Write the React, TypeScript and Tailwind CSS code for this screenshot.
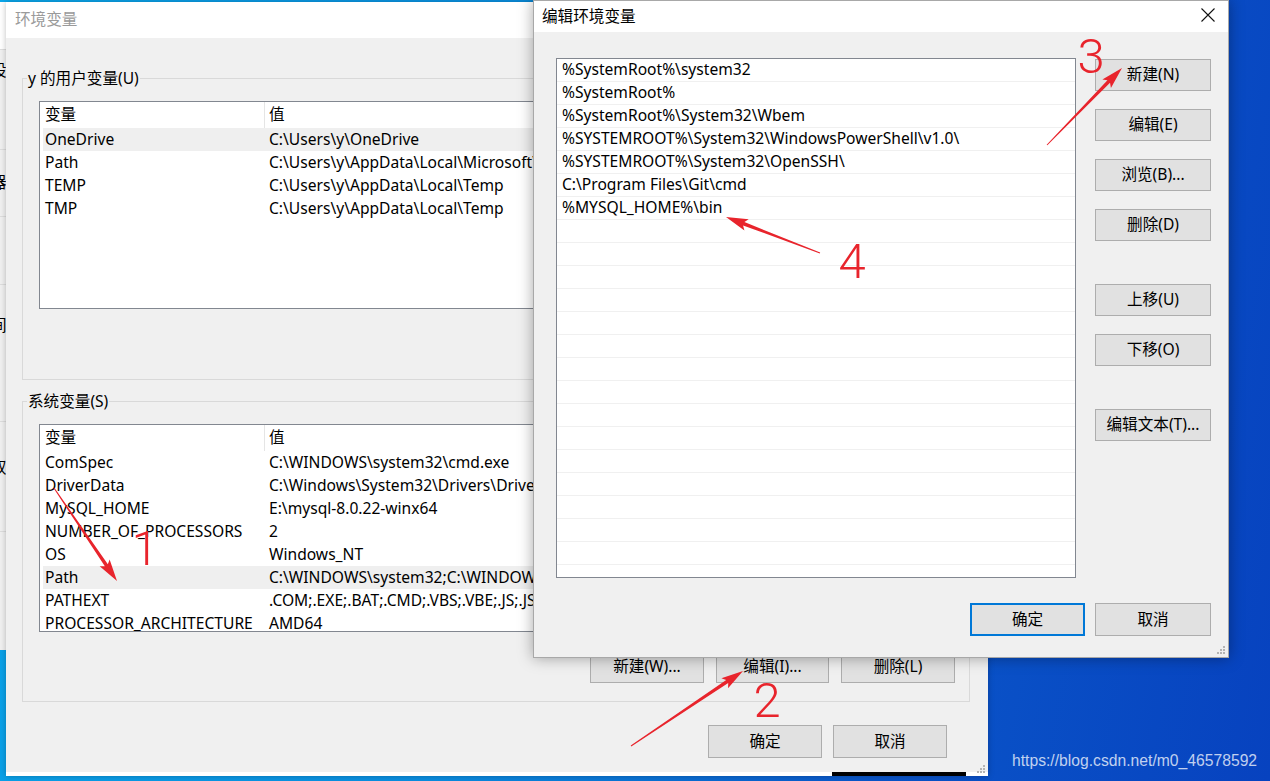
import React from 'react';

type Pair = [string, string];

const userVars: Pair[] = [
  ['OneDrive', 'C:\\Users\\y\\OneDrive'],
  ['Path', 'C:\\Users\\y\\AppData\\Local\\Microsoft\\WindowsApps;'],
  ['TEMP', 'C:\\Users\\y\\AppData\\Local\\Temp'],
  ['TMP', 'C:\\Users\\y\\AppData\\Local\\Temp'],
];

const sysVars: Pair[] = [
  ['ComSpec', 'C:\\WINDOWS\\system32\\cmd.exe'],
  ['DriverData', 'C:\\Windows\\System32\\Drivers\\DriverData'],
  ['MySQL_HOME', 'E:\\mysql-8.0.22-winx64'],
  ['NUMBER_OF_PROCESSORS', '2'],
  ['OS', 'Windows_NT'],
  ['Path', 'C:\\WINDOWS\\system32;C:\\WINDOWS;C:\\WINDOWS\\System32\\Wbem;'],
  ['PATHEXT', '.COM;.EXE;.BAT;.CMD;.VBS;.VBE;.JS;.JSE;.WSF;.WSH;.MSC'],
  ['PROCESSOR_ARCHITECTURE', 'AMD64'],
  ['PROCESSOR_IDENTIFIER', 'Intel64 Family 6 Model 158'],
];

const pathEntries = [
  '%SystemRoot%\\system32',
  '%SystemRoot%',
  '%SystemRoot%\\System32\\Wbem',
  '%SYSTEMROOT%\\System32\\WindowsPowerShell\\v1.0\\',
  '%SYSTEMROOT%\\System32\\OpenSSH\\',
  'C:\\Program Files\\Git\\cmd',
  '%MYSQL_HOME%\\bin',
];

// red annotation arrows: tail -> tip
const arrows = [
  [54, 488, 117, 581],
  [631, 746, 743, 671],
  [1047, 145, 1122, 68],
  [820, 253, 726, 217],
];

const marks = [
  { n: '1', x: 145, y: 565 },
  { n: '2', x: 767, y: 717 },
  { n: '3', x: 1091, y: 73 },
  { n: '4', x: 852, y: 278 },
];

function arrowPoints(x1: number, y1: number, x2: number, y2: number) {
  const dx = x2 - x1;
  const dy = y2 - y1;
  const len = Math.hypot(dx, dy);
  const ux = dx / len;
  const uy = dy / len;
  const nx = -uy;
  const ny = ux;
  const H = 19, W = 6, w2 = 1.8, w1 = 0.5;
  const bx = x2 - ux * H;
  const by = y2 - uy * H;
  const pts = [
    [x1 + nx * w1, y1 + ny * w1],
    [bx + nx * w2, by + ny * w2],
    [bx - ux * 3 + nx * W, by - uy * 3 + ny * W],
    [x2, y2],
    [bx - ux * 3 - nx * W, by - uy * 3 - ny * W],
    [bx - nx * w2, by - ny * w2],
    [x1 - nx * w1, y1 - ny * w1],
  ];
  return pts.map((p) => p.join(',')).join(' ');
}

const Btn = ({ label, w = 'w-[114px]', h = 'h-[33px]', focused = false }: { label: string; w?: string; h?: string; focused?: boolean }) => (
  <div
    className={`${w} ${h} shrink-0 flex items-center justify-center bg-[#e1e1e1] ${
      focused ? 'border-2 border-[#0078d7]' : 'border border-[#adadad]'
    }`}
  >
    {label}
  </div>
);

const Grip = () => (
  <svg className="absolute right-[2px] bottom-[2px]" width="10" height="10" viewBox="0 0 10 10">
    {[[8, 2], [8, 5], [5, 5], [8, 8], [5, 8], [2, 8]].map(([x, y]) => (
      <rect key={`${x}-${y}`} x={x - 1} y={y - 1} width="2" height="2" fill="#b4b4b4" />
    ))}
  </svg>
);

const VarList = ({ rows, selected }: { rows: Pair[]; selected: number }) => (
  <div className="h-[208px] bg-white border border-[#828790] overflow-hidden whitespace-nowrap">
    <div className="flex h-[26px] items-center">
      <div className="w-[225px] h-full shrink-0 pl-[5px] flex items-center border-r border-[#e5e5e5]">变量</div>
      <div className="pl-[4px]">值</div>
    </div>
    {rows.map(([k, v], i) => (
      <div key={k} className={`ml-[3px] flex h-[23px] items-center ${i === selected ? 'bg-[#efefef]' : ''}`}>
        <div className="w-[222px] shrink-0 pl-[2px]">{k}</div>
        <div className="pl-[4px]">{v}</div>
      </div>
    ))}
  </div>
);

const BackWindow = () => {
  const segs: { h: string; ch: string; pt: string; bg: string }[] = [
    { h: 'h-[48px]', ch: '', pt: 'pt-0', bg: 'bg-white' },
    { h: 'h-[100px]', ch: '设', pt: 'pt-[10px]', bg: 'bg-[#f0f0f0]' },
    { h: 'h-[67px]', ch: '器', pt: 'pt-[22px]', bg: 'bg-[#f0f0f0]' },
    { h: 'h-[68px]', ch: '', pt: 'pt-0', bg: 'bg-[#f0f0f0]' },
    { h: 'h-[137px]', ch: '间', pt: 'pt-[30px]', bg: 'bg-[#f0f0f0]' },
    { h: 'h-[110px]', ch: '双', pt: 'pt-[35px]', bg: 'bg-[#f0f0f0]' },
    { h: 'h-[120px]', ch: '', pt: 'pt-0', bg: 'bg-[#f0f0f0]' },
  ];
  return (
    <div className="absolute left-0 top-[2px] w-[6px] h-[648px] overflow-hidden flex flex-col">
      {segs.map((s, i) => (
        <div key={i} className={`${s.h} ${s.pt} ${s.bg} shrink-0 border-b border-[#dddddd] leading-5`}>
          {s.ch && <span className="block ml-[-9px]">{s.ch}</span>}
        </div>
      ))}
    </div>
  );
};

const MainWindow = () => (
  <div className="absolute left-[6px] top-[2px] w-[982px] h-[774px] flex flex-col bg-[#f0f0f0] shadow-[0_0_6px_rgba(0,0,0,0.25)]">
    <div className="h-9 shrink-0 bg-white flex items-center pl-[9px] text-[#9a9a9a]">环境变量</div>
    <div className="flex-1 flex flex-col pt-[30px] pl-4 pr-[18px]">
      <fieldset className="border border-[#d9d9d9] pl-1 pr-[14px] pt-[13px] pb-[21px] min-w-0">
        <legend className="px-px leading-5">y 的用户变量(U)</legend>
        <div className="ml-3">
          <VarList rows={userVars} selected={0} />
        </div>
        <div className="mt-4 flex justify-end gap-3">
          <Btn label="新建(N)..." />
          <Btn label="编辑(E)..." w="w-[113px]" />
          <Btn label="删除(D)" />
        </div>
      </fieldset>

      <fieldset className="mt-[11px] border border-[#d9d9d9] pl-1 pr-[14px] pt-[13px] pb-[18px] min-w-0">
        <legend className="px-px leading-5">系统变量(S)</legend>
        <div className="ml-3">
          <VarList rows={sysVars} selected={5} />
        </div>
        <div className="mt-[18px] flex justify-end gap-3">
          <Btn label="新建(W)..." />
          <Btn label="编辑(I)..." w="w-[113px]" />
          <Btn label="删除(L)" />
        </div>
      </fieldset>

      <div className="mt-[23px] pr-[23px] flex justify-end gap-[11px]">
        <Btn label="确定" />
        <Btn label="取消" />
      </div>
    </div>
    <div className="h-1 shrink-0 bg-white flex justify-end pr-[22px]">
      <div className="w-[134px] bg-black" />
    </div>
    <Grip />
  </div>
);

const EditDialog = () => (
  <div className="absolute left-[533px] top-0 w-[696px] h-[658px] flex flex-col bg-[#f0f0f0] border border-[#a8a8a8] shadow-[0_0_14px_rgba(0,0,0,0.35)]">
    <div className="h-[31px] shrink-0 bg-white flex items-center justify-between pl-2 pr-[13px]">
      <span>编辑环境变量</span>
      <svg width="14" height="14" viewBox="0 0 14 14" className="-mt-[3px]">
        <path d="M0.5 0.5 L13.5 13.5 M13.5 0.5 L0.5 13.5" stroke="#111" strokeWidth="1.1" fill="none" />
      </svg>
    </div>
    <div className="flex-1 flex flex-col pt-[26px] pl-[22px] pr-[17px]">
      <div className="flex gap-[19px]">
        <div className="w-[520px] h-[520px] shrink-0 bg-white border border-[#828790] overflow-hidden whitespace-nowrap">
          {Array.from({ length: 23 }).map((_, i) => (
            <div key={i} className="h-[23px] flex items-center pl-[5px] border-b border-[#f0f0f0]">
              {pathEntries[i] ?? ''}
            </div>
          ))}
        </div>
        <div className="w-[116px] flex flex-col">
          <div className="mt-px"><Btn label="新建(N)" w="w-[116px]" h="h-[32px]" /></div>
          <div className="mt-[18px]"><Btn label="编辑(E)" w="w-[116px]" h="h-[32px]" /></div>
          <div className="mt-[18px]"><Btn label="浏览(B)..." w="w-[116px]" h="h-[32px]" /></div>
          <div className="mt-[18px]"><Btn label="删除(D)" w="w-[116px]" h="h-[32px]" /></div>
          <div className="mt-[43px]"><Btn label="上移(U)" w="w-[116px]" h="h-[32px]" /></div>
          <div className="mt-[18px]"><Btn label="下移(O)" w="w-[116px]" h="h-[32px]" /></div>
          <div className="mt-[43px]"><Btn label="编辑文本(T)..." w="w-[116px]" h="h-[32px]" /></div>
        </div>
      </div>
      <div className="mt-[25px] flex justify-end gap-[10px]">
        <Btn label="确定" w="w-[115px]" focused />
        <Btn label="取消" w="w-[116px]" />
      </div>
    </div>
    <Grip />
  </div>
);

const Annotations = () => (
  <svg className="absolute left-0 top-0 pointer-events-none" width="1270" height="781" viewBox="0 0 1270 781">
    {arrows.map(([x1, y1, x2, y2], i) => (
      <polygon key={i} points={arrowPoints(x1, y1, x2, y2)} fill="#e8242c" />
    ))}
    {marks.map((m) => (
      <text
        key={m.n}
        x={m.x}
        y={m.y}
        textAnchor="middle"
        fontSize="49"
        fontWeight="300"
        fill="#e8242c"
        fontFamily="Roboto, 'Liberation Sans', sans-serif"
      >
        {m.n}
      </text>
    ))}
  </svg>
);

export default function App() {
  return (
    <div className="relative w-[1270px] h-[781px] overflow-hidden bg-[linear-gradient(100deg,#0aa6ea_0%,#0a8ddf_40%,#0a55c9_72%,#0742bf_100%)] font-['Noto_Sans','Noto_Sans_CJK_SC',sans-serif] text-[15.6px] text-black">
      <BackWindow />
      <MainWindow />
      <EditDialog />
      <div className="absolute left-[1012px] top-[753px] font-['Liberation_Sans',sans-serif] text-[15.7px] leading-4 text-white/75">
        https://blog.csdn.net/m0_46578592
      </div>
      <Annotations />
    </div>
  );
}
